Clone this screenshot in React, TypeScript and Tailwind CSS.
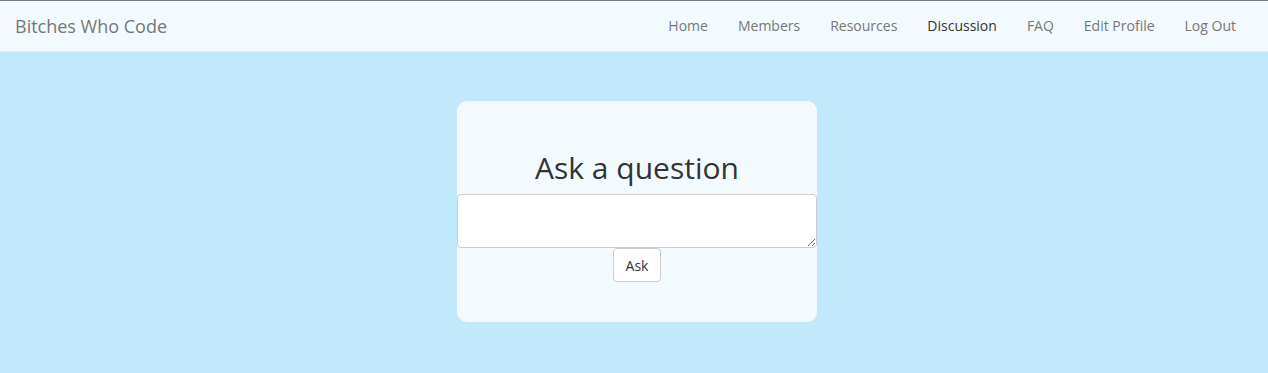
export default function App() {
  const links = ['Home', 'Members', 'Resources', 'Discussion', 'FAQ', 'Edit Profile', 'Log Out'];

  return (
    <div className="min-h-[373px] bg-[#c1e9fb] font-['Open_Sans',sans-serif]">
      <nav className="h-[52px] bg-[#f2fafe] border-t border-t-[#7a7a7a] border-b border-b-[#e3f1f8] flex items-center justify-between pl-[15px] pr-[17px]">
        <a className="text-[18px] text-[#777] leading-[20px]">Bitches Who Code</a>
        <ul className="flex items-center">
          {links.map((l) => (
            <li key={l}>
              <a
                className={`block px-[15px] text-[14px] leading-[20px] ${
                  l === 'Discussion' ? 'text-[#333]' : 'text-[#777]'
                }`}
              >
                {l}
              </a>
            </li>
          ))}
        </ul>
      </nav>

      <div className="flex justify-center pt-[49px] pl-[6px]">
        <div className="w-[360px] bg-[#f2fafe] rounded-[10px] flex flex-col items-center pt-[50px] pb-[40px]">
          <h2 className="text-[30px] leading-[33px] text-[#333] mb-[10px]">Ask a question</h2>
          <textarea className="w-full h-[54px] bg-white border border-[#ccc] rounded-[4px] block" />
          <button className="h-[34px] px-[12px] bg-white border border-[#ccc] rounded-[4px] text-[14px] text-[#333]">
            Ask
          </button>
        </div>
      </div>
    </div>
  );
}
